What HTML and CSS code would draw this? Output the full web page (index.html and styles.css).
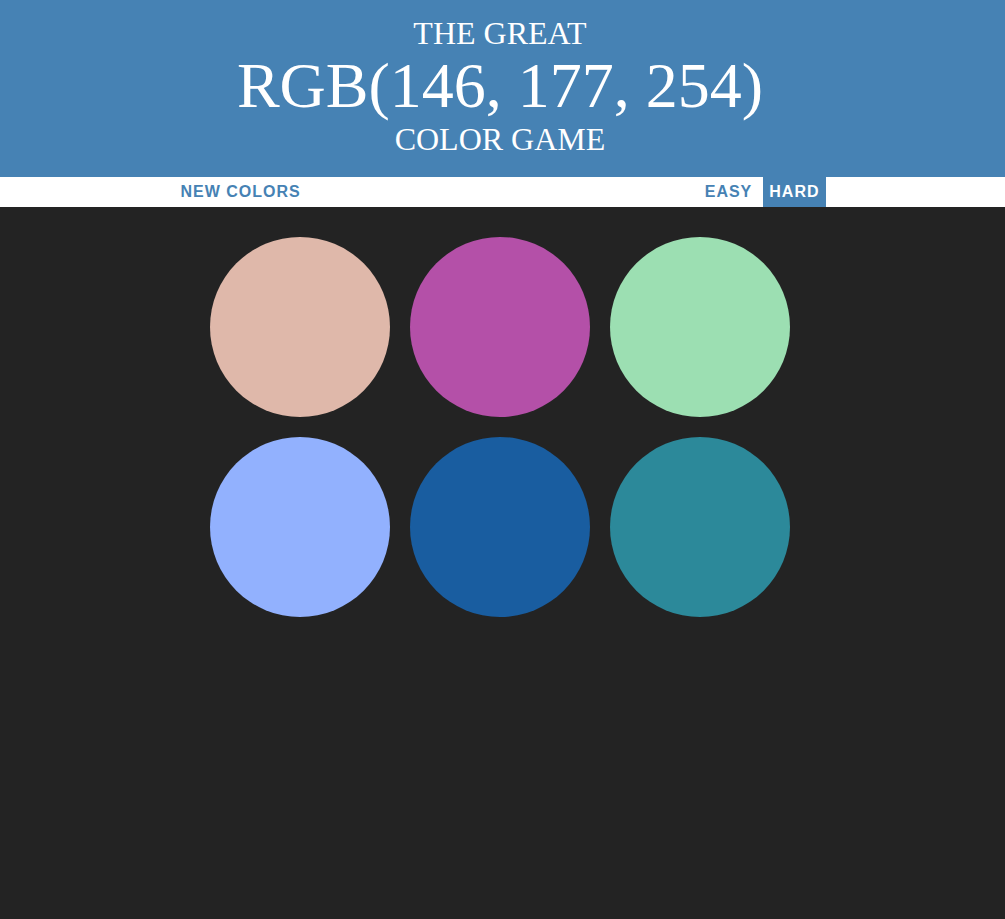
FILE: index.html
```html
<!DOCTYPE html>
<html>
<head>
<meta charset="utf-8">
<title>Color Game</title>
<link rel="stylesheet" href="styles.css">
</head>
<body>
<h1 class="title">The Great<br><span class="color-display">RGB(146, 177, 254)</span><br>Color Game</h1>
<div class="stripe">
  <button class="btn btn-new">New Colors</button>
  <span class="message"></span>
  <button class="btn">Easy</button>
  <button class="btn selected">Hard</button>
</div>
<div class="container">
  <div class="square" style="background: rgb(223, 184, 170);"></div>
  <div class="square" style="background: rgb(180, 80, 168);"></div>
  <div class="square" style="background: rgb(156, 223, 178);"></div>
  <div class="square" style="background: rgb(146, 177, 254);"></div>
  <div class="square" style="background: rgb(25, 93, 160);"></div>
  <div class="square" style="background: rgb(44, 137, 154);"></div>
</div>
</body>
</html>
```
FILE: styles.css
```css
body {
  margin: 0;
  padding-right: 5px;
  background: #232323;
  font-family: "Liberation Serif", "Times New Roman", serif;
}
.title {
  margin: 0 -5px 0 0;
  padding: 16px 5px 20px 0;
  text-align: center;
  line-height: 1.1;
  font-size: 32px;
  font-weight: normal;
  color: white;
  background: steelblue;
  text-transform: uppercase;
}
.color-display {
  font-size: 200%;
}
.stripe {
  margin-right: -5px;
  padding-right: 5px;
  background: white;
  height: 30px;
  display: flex;
  justify-content: center;
  align-items: stretch;
}
.btn {
  border: none;
  background: none;
  margin: 0;
  padding: 1px 6px;
  height: 100%;
  font-family: "Liberation Sans", Arial, sans-serif;
  font-size: 16px;
  font-weight: 700;
  letter-spacing: 1px;
  color: steelblue;
  text-transform: uppercase;
}
.btn.selected {
  color: white;
  background: steelblue;
  margin-left: 5px;
}
.message {
  width: 392px;
}
.container {
  max-width: 600px;
  margin: 20px auto;
  display: flex;
  flex-wrap: wrap;
}
.square {
  width: 180px;
  height: 180px;
  margin: 10px;
  border-radius: 50%;
}
```
